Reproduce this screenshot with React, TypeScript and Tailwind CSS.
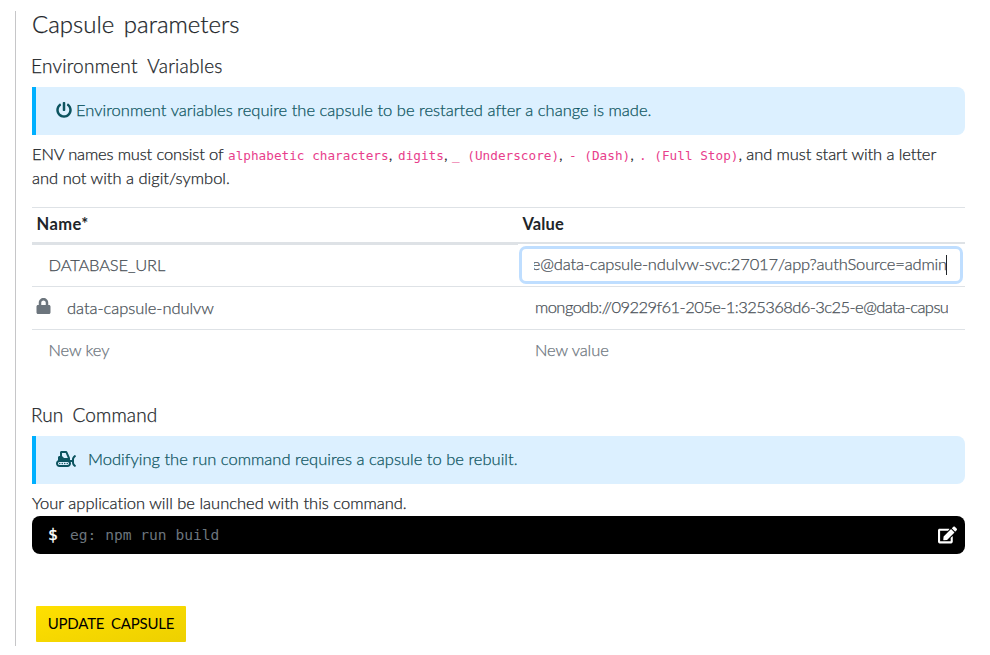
import type { ReactNode } from "react";
import { FaEdit, FaLock, FaPowerOff, FaSnowplow } from "react-icons/fa";

function Code({ children }: { children: ReactNode }) {
  return (
    <code className="font-['DejaVu_Sans_Mono',monospace] text-[12.7px] font-normal tracking-[0.01px] text-[#e83e8c] [-webkit-text-stroke:0]">
      {children}
    </code>
  );
}

function Alert({ children }: { children: ReactNode }) {
  return (
    <div className="flex h-12 items-center rounded-lg rounded-l-none border-l-4 border-[#00b0ff] bg-[#dcf0ff] pb-0.5 pl-[19.5px] tracking-[0.02px] text-[#0c5460]">
      {children}
    </div>
  );
}

export default function App() {
  return (
    <div className="h-[655px] w-[990px] overflow-hidden bg-white pt-[11px] pl-[15px] font-['Lato',sans-serif] text-[16.5px] leading-6 font-light whitespace-nowrap text-[#212529] [font-variant-ligatures:none] [-webkit-text-stroke:0.25px]">
      <main className="h-[635px] w-[950px] border-l border-[#c6c6c8] pl-4">
        <h1 className="h-[41px] text-[24px] leading-[25px] [word-spacing:3px]">Capsule parameters</h1>
        <h2 className="-ml-px h-[35px] text-[19px] leading-[28px] tracking-[0.24px] [word-spacing:5px]">Environment Variables</h2>
        <Alert>
          <FaPowerOff className="mr-[4.5px] size-4" />
          <span>Environment variables require the capsule to be restarted after a change is made.</span>
        </Alert>
        <div className="mt-[7px] flex h-6 items-baseline">
          <span className="w-[196px] tracking-[-0.15px]">ENV names must consist of</span>
          <span className="w-[170px]"><Code>alphabetic characters</Code>,</span>
          <span className="w-[54px]"><Code>digits</Code>,</span>
          <span className="w-[117px]"><Code>_ (Underscore)</Code>,</span>
          <span className="w-[70px]"><Code>- (Dash)</Code>,</span>
          <span><Code>. (Full Stop)</Code></span>
          <span className="tracking-[-0.09px]">, and must start with a letter</span>
        </div>
        <p>and not with a digit/symbol.</p>

        <div className="mt-[17px] border-t border-[#dee2e6]">
          <div className="flex h-[34px] items-center pb-0.5 font-bold [-webkit-text-stroke:0]">
            <span className="w-[490.5px] pl-[4.5px] tracking-[0.4px]">Name*</span>
            <span className="tracking-[0.1px]">Value</span>
          </div>
          <div className="flex h-[45px] border-b border-[#dee2e6]">
            <div className="w-[486px] border-t-3 border-[#dee2e6] pt-[8px] pl-[16.5px] tracking-[-0.15px] text-[#495057]">DATABASE_URL</div>
            <div className="flex-1 border-t-2 border-[#dee2e6] pt-[2px] pr-[2px] pl-[1px]">
              <div className="flex h-[38px] items-center rounded-[7px] border-3 border-[#bfdeff] bg-white px-3 pb-0.5 text-[#495057]">
                <div className="flex w-[413px] justify-end overflow-hidden tracking-[-0.15px]">
                  <span>e@data-capsule-ndulvw-svc:27017/app?authSource=admin</span>
                </div>
                <span className="mt-0.5 -ml-px h-5 w-px shrink-0 bg-[#212529]" />
              </div>
            </div>
          </div>
          <div className="flex h-[43px] items-center border-b border-[#dee2e6] text-[#495057]">
            <div className="flex w-[503px] items-center pl-1">
              <FaLock className="mr-4 mb-[5px] h-4 w-[15px] text-[#6c757d]" />
              <span className="tracking-[-0.05px]">data-capsule-ndulvw</span>
            </div>
            <span className="mb-0.5 w-[413px] overflow-hidden tracking-[-0.56px]">mongodb://09229f61-205e-1:325368d6-3c25-e@data-capsu</span>
          </div>
          <div className="flex h-[42px] items-center pb-0.5 text-[#6c757d]">
            <span className="w-[503px] pl-[16.5px] tracking-[-0.1px]">New key</span>
            <span className="tracking-[-0.1px]">New value</span>
          </div>
        </div>

        <h2 className="mt-[29px] -ml-px h-[35px] text-[19px] leading-[28px] tracking-[0.1px] [word-spacing:4px]">Run Command</h2>
        <Alert>
          <FaSnowplow className="mr-[12.5px] h-4 w-5" />
          <span>Modifying the run command requires a capsule to be rebuilt.</span>
        </Alert>
        <p className="mt-[7px] mb-px">Your application will be launched with this command.</p>
        <div className="flex h-[38px] items-center rounded-lg bg-black pr-2 pl-4 font-['DejaVu_Sans_Mono',monospace] text-[14.6px] font-normal [-webkit-text-stroke:0]">
          <span className="w-[22px] text-[16px] text-white [-webkit-text-stroke:0.4px]">$</span>
          <span className="flex-1 text-[#6c757d]">eg: npm run build</span>
          <FaEdit className="h-[18px] w-[19px] text-white" />
        </div>
        <button className="mt-[52px] ml-1 h-9 w-[150px] rounded-[1px] bg-linear-to-br from-[#ffe000] to-[#edd000] pb-0.5 text-[15px] font-normal tracking-[-0.2px] text-black [word-spacing:3px] [-webkit-text-stroke:0]">
          UPDATE CAPSULE
        </button>
      </main>
    </div>
  );
}
